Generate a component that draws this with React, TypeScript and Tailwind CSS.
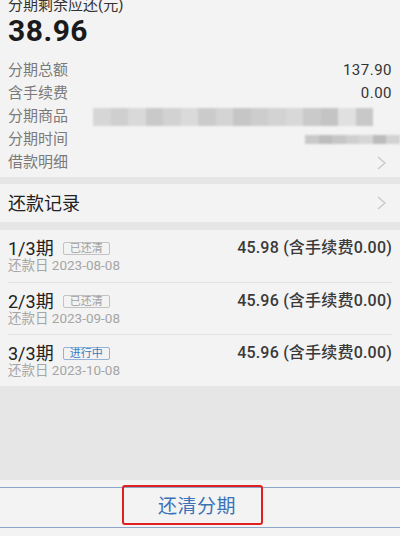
const font = { fontFamily: '"Roboto", "Noto Sans CJK SC", sans-serif' };

/* summary rows — values are text or a pixelated (redacted) strip */
const infoRows = [
  { label: "分期总额", value: "137.90" },
  { label: "含手续费", value: "0.00" },
  { label: "分期商品", blur: "long" },
  { label: "分期时间", blur: "short" },
  { label: "借款明细", arrow: true },
];

const records = [
  { term: "1/3期", status: "已还清", done: true, amount: "45.98", date: "2023-08-08" },
  { term: "2/3期", status: "已还清", done: true, amount: "45.96", date: "2023-09-08" },
  { term: "3/3期", status: "进行中", done: false, amount: "45.96", date: "2023-10-08" },
];

const longShades = [
  "#d6d6d6", "#cfcfcf", "#d9d9d9", "#c9c9c9", "#d2d2d2", "#dadada", "#cbcbcb", "#d4d4d4",
  "#c6c6c6", "#cdcdcd", "#d3d3d3", "#d8d8d8", "#cacaca", "#c4c4c4", "#e0e0e0", "#c8c8c8",
];
const shortShades = ["#c9c9c9", "#bdbdbd", "#c6c6c6", "#cfcfcf", "#d6d6d6", "#bcbcbc", "#d2d2d2"];

function Chevron() {
  return (
    <svg width="9" height="14" viewBox="0 0 9 14" className="mr-[6px]">
      <polyline points="1,1 8,7 1,13" fill="none" stroke="#c6c6c6" strokeWidth="1.2" />
    </svg>
  );
}

function Redacted({ kind }: { kind: string }) {
  const shades = kind === "long" ? longShades : shortShades;
  return (
    <div
      className={
        kind === "long"
          ? "flex h-[18px] w-[280px] ml-[25px] mr-auto blur-[1px]"
          : "flex h-[9px] w-[95px] ml-auto mr-[-8px] blur-[1px]"
      }
    >
      {shades.map((c, i) => (
        <div key={i} className="flex-1 h-full" style={{ backgroundColor: c }} />
      ))}
    </div>
  );
}

export default function App() {
  return (
    <div style={font} className="w-[400px] h-[536px] bg-[#e6e6e6] flex flex-col overflow-hidden">
      {/* Summary card */}
      <div className="bg-[#f3f3f3] px-2 pb-[3px]">
        <div className="text-[15px] leading-[20px] mt-[-5px] text-[#333]">分期剩余应还(元)</div>
        <div className="text-[30px] leading-[32px] font-bold text-[#1a1a1a] tracking-[0.5px]">38.96</div>
        <div className="mt-[12px] flex flex-col">
          {infoRows.map((row) => (
            <div key={row.label} className="h-[23px] flex items-center">
              <span className="text-[15px] text-[#7a7a7a] shrink-0">{row.label}</span>
              {row.value && (
                <span className="ml-auto text-[15px] text-[#333] tracking-[0.5px]">{row.value}</span>
              )}
              {row.blur && <Redacted kind={row.blur} />}
              {row.arrow && (
                <span className="ml-auto">
                  <Chevron />
                </span>
              )}
            </div>
          ))}
        </div>
      </div>

      {/* Repayment record header */}
      <div className="mt-[7px] bg-[#f3f3f3] h-[38px] px-2 flex items-center">
        <span className="text-[18px] text-[#222]">还款记录</span>
        <span className="ml-auto">
          <Chevron />
        </span>
      </div>

      {/* Records */}
      <div className="mt-[8px] bg-[#f3f3f3] flex flex-col">
        {records.map((r, i) => (
          <div key={r.term} className={"mx-2 h-[52px] pt-[8px] " + (i > 0 ? "border-t border-[#e2e2e2]" : "")}>
            <div className="flex items-center h-[20px]">
              <span className="text-[18px] text-[#222]">{r.term}</span>
              <span
                className={
                  "ml-[9px] h-[13px] px-[6px] flex items-center text-[11px] leading-none border rounded-[2px] " +
                  (r.done ? "border-[#c2c2c2] text-[#a0a0a0]" : "border-[#93b3d8] text-[#3c7cc0]")
                }
              >
                {r.status}
              </span>
              <span className="ml-auto text-[16px] font-medium text-[#3a3a3a] tracking-[0.2px]">
                {r.amount} (含手续费0.00)
              </span>
            </div>
            <div className="text-[13.5px] leading-[14px] text-[#a5a5a5]">还款日 {r.date}</div>
          </div>
        ))}
      </div>

      <div className="flex-1" />

      {/* Bottom action bar */}
      <div className="relative h-[56px] bg-[#f3f3f3] pt-[7px]">
        <div className="h-[41px] border-y border-[#8aa6c8] flex items-center justify-center">
          <span className="text-[19px] text-[#3a72b8] tracking-[0.5px] mr-[6px]">还清分期</span>
        </div>
        {/* red highlight annotation */}
        <div className="absolute left-[122px] top-[5px] w-[141px] h-[40px] border-2 border-[#e02020] rounded-[3px]" />
      </div>
    </div>
  );
}
